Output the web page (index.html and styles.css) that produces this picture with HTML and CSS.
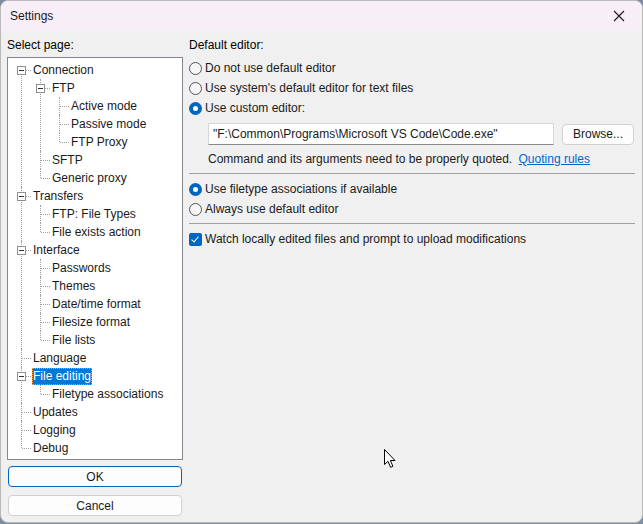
FILE: index.html
```html
<!DOCTYPE html>
<html lang="en">
<head>
  <meta charset="UTF-8" />
  <title>Settings</title>
  <link rel="stylesheet" href="styles.css">
</head>
<body>
  <div class="window">
    <div class="titlebar">
      <span class="title">Settings</span>
      <span class="close">
        <svg width="12" height="12" viewBox="0 0 12 12"><path d="M1 1 L11 11 M11 1 L1 11" stroke="#1a1a1a" stroke-width="1.1" fill="none"/></svg>
      </span>
    </div>

    <div class="content">
      <div class="side">
        <div class="caption">Select page:</div>
        <div class="treebox">
          <ul class="tree">
            <li><span class="exp"></span><span class="label">Connection</span>
              <ul>
                <li><span class="exp"></span><span class="label">FTP</span>
                  <ul>
                    <li><span class="label">Active mode</span></li>
                    <li><span class="label">Passive mode</span></li>
                    <li><span class="label">FTP Proxy</span></li>
                  </ul>
                </li>
                <li><span class="label">SFTP</span></li>
                <li><span class="label">Generic proxy</span></li>
              </ul>
            </li>
            <li><span class="exp"></span><span class="label">Transfers</span>
              <ul>
                <li><span class="label">FTP: File Types</span></li>
                <li><span class="label">File exists action</span></li>
              </ul>
            </li>
            <li><span class="exp"></span><span class="label">Interface</span>
              <ul>
                <li><span class="label">Passwords</span></li>
                <li><span class="label">Themes</span></li>
                <li><span class="label">Date/time format</span></li>
                <li><span class="label">Filesize format</span></li>
                <li><span class="label">File lists</span></li>
              </ul>
            </li>
            <li><span class="label">Language</span></li>
            <li><span class="exp"></span><span class="label selected">File editing</span>
              <ul>
                <li><span class="label">Filetype associations</span></li>
              </ul>
            </li>
            <li><span class="label">Updates</span></li>
            <li><span class="label">Logging</span></li>
            <li><span class="label">Debug</span></li>
          </ul>
        </div>
        <button class="btn default">OK</button>
        <button class="btn cancel">Cancel</button>
      </div>

      <div class="page">
        <div class="caption">Default editor:</div>
        <label class="option"><span class="radio"></span>Do not use default editor</label>
        <label class="option"><span class="radio"></span>Use system's default editor for text files</label>
        <label class="option"><span class="radio checked"></span>Use custom editor:</label>

        <div class="editor-row">
          <input class="edit" type="text" value="&quot;F:\Common\Programs\Microsoft VS Code\Code.exe&quot;">
          <button class="btn browse">Browse...</button>
        </div>
        <div class="note">Command and its arguments need to be properly quoted. <a href="#" class="link">Quoting rules</a></div>

        <div class="sep"></div>

        <label class="option"><span class="radio checked"></span>Use filetype associations if available</label>
        <label class="option"><span class="radio"></span>Always use default editor</label>

        <div class="sep second"></div>

        <label class="option"><span class="check"></span>Watch locally edited files and prompt to upload modifications</label>
      </div>
    </div>

    <svg class="cursor" width="13" height="20" viewBox="0 0 13 20">
      <path d="M0.5 0.5 L0.5 15.5 L4 12.3 L6.6 18.3 L8.9 17.3 L6.4 11.5 L11 11.5 Z" fill="#fff" stroke="#000" stroke-width="1" stroke-linejoin="round"/>
    </svg>
  </div>
</body>
</html>
```

FILE: styles.css
```css
* {
  box-sizing: border-box;
}

body {
  margin: 0;
  background-color: #7d8da0;
  font-family: "Liberation Sans", Arial, sans-serif;
  font-size: 12px;
  color: #000;
}

.window {
  position: relative;
  width: 643px;
  height: 523px;
  background-color: #f0f0f0;
  border: 1px solid #b9b9b9;
  border-radius: 8px;
  overflow: hidden;
}

.titlebar {
  height: 30px;
  background-color: #f8eef7;
  display: flex;
  align-items: center;
  justify-content: space-between;
  padding: 0 9px 0 9px;
}

.title {
  font-size: 12px;
  color: #1a1a1a;
}

.close {
  display: flex;
  margin-right: 8px;
}

.content {
  display: flex;
  padding: 6px 0 0 6px;
}

.caption {
  height: 20px;
  line-height: 16px;
}

/* left column: page tree and dialog buttons */
.side {
  width: 176px;
  display: flex;
  flex-direction: column;
}

.treebox {
  height: 403px;
  background-color: #fff;
  border: 1px solid #828790;
  padding-top: 3px;
}

.tree,
.tree ul {
  list-style: none;
  margin: 0;
  padding: 0;
}

.tree {
  padding-left: 13px;
}

.tree ul {
  margin-left: 8px;
}

.tree li {
  position: relative;
  padding-left: 11px;
  line-height: 18px;
}

.tree li::before {
  content: "";
  position: absolute;
  left: 0;
  top: 0;
  bottom: 0;
  border-left: 1px dotted #a0a0a0;
}

.tree li:last-child::before {
  bottom: auto;
  height: 9px;
}

.tree > li:first-child::before {
  top: 9px;
}

.tree li::after {
  content: "";
  position: absolute;
  left: 1px;
  top: 9px;
  width: 9px;
  border-top: 1px dotted #a0a0a0;
}

.exp {
  position: absolute;
  left: -4px;
  top: 5px;
  width: 9px;
  height: 9px;
  background-color: #fff;
  border: 1px solid #919191;
  z-index: 1;
}

.exp::after {
  content: "";
  position: absolute;
  left: 1px;
  top: 3px;
  width: 5px;
  height: 1px;
  background-color: #333;
}

.label {
  display: inline-block;
  padding: 0 1px;
  line-height: 17px;
  color: #1a1a1a;
}

.label.selected {
  background-color: #0078d7;
  color: #fff;
  outline: 1px dotted #f0a040;
  outline-offset: -1px;
}

.btn {
  font-family: inherit;
  font-size: 12px;
  color: #1a1a1a;
  background-color: #fdfdfd;
  border: 1px solid #d0d0d0;
  border-radius: 4px;
  height: 21px;
  padding: 0;
}

.side .btn {
  width: 174px;
  margin-left: 1px;
}

.btn.default {
  margin-top: 6px;
  border-color: #0067c0;
}

.btn.cancel {
  margin-top: 8px;
}

/* right column: file editing page */
.page {
  margin-left: 6px;
  width: 446px;
  display: flex;
  flex-direction: column;
}

.page .caption {
  height: 21px;
}

.option {
  display: flex;
  align-items: center;
  height: 20px;
  gap: 3px;
  color: #1a1a1a;
}

.radio {
  width: 13px;
  height: 13px;
  border-radius: 50%;
  border: 1px solid #555;
  background-color: #f6f6f6;
  flex: none;
}

.radio.checked {
  border: 4px solid #0067c0;
  background-color: #fff;
}

.check {
  width: 13px;
  height: 13px;
  border-radius: 2px;
  background-color: #0067c0;
  flex: none;
  position: relative;
}

.check::after {
  content: "";
  position: absolute;
  left: 4px;
  top: 2px;
  width: 3px;
  height: 6px;
  border-right: 1px solid #fff;
  border-bottom: 1px solid #fff;
  transform: rotate(40deg);
}

.editor-row {
  display: flex;
  align-items: center;
  gap: 8px;
  margin: 5px 0 0 19px;
}

.edit {
  width: 346px;
  height: 22px;
  font-family: inherit;
  font-size: 12px;
  color: #1a1a1a;
  border: 1px solid #d6d6d6;
  border-bottom-color: #8a8a8a;
  background-color: #fff;
  padding: 0 4px;
  outline: none;
}

.btn.browse {
  width: 72px;
  height: 21px;
}

.note {
  margin: 6px 0 0 19px;
  line-height: 16px;
  color: #1a1a1a;
}

.link {
  color: #0066cc;
  margin-left: 3px;
}

.sep {
  height: 1px;
  background-color: #a0a0a0;
  margin: 6px 0 5px 0;
}

.sep.second {
  margin: 4px 0 5px 0;
}

.cursor {
  position: absolute;
  left: 383px;
  top: 448px;
}
```
